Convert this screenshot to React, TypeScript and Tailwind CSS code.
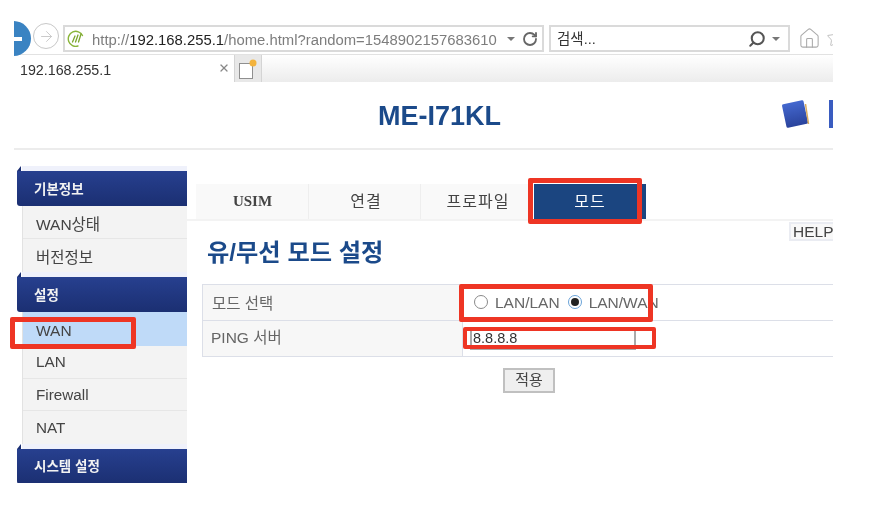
import { ArrowRight, House, RotateCw, Search, Star, X } from 'lucide-react';

const menuGroups = [
  { title: '기본정보', items: ['WAN상태', '버전정보'] },
  { title: '설정', items: ['WAN', 'LAN', 'Firewall', 'NAT'] },
  { title: '시스템 설정', items: [] as string[] },
];

const tabs = ['USIM', '연결', '프로파일'];

function SiteIcon() {
  return (
    <svg width="18" height="18" viewBox="0 0 18 18" fill="none" stroke="#8ab53a" strokeLinecap="round">
      <path d="M15.5 5.5A7.5 7.5 0 1 0 11 16" strokeWidth="1.4" />
      <path d="M5.5 12 8 6M8.5 12 11 5M11.5 12 14 4" strokeWidth="1.3" stroke="#7aa52c" />
    </svg>
  );
}

function NewTabIcon() {
  return (
    <svg width="20" height="20" viewBox="0 0 20 20">
      <rect x="1.5" y="4.5" width="13" height="15" fill="#fff" stroke="#8f8f8f" />
      <circle cx="15" cy="4" r="3.5" fill="#f3b33d" />
    </svg>
  );
}

function BookIcon() {
  return (
    <svg width="30" height="32" viewBox="0 0 30 32">
      <defs>
        <linearGradient id="book" x1="0" y1="0" x2="0" y2="1">
          <stop offset="0" stopColor="#4468cf" />
          <stop offset="1" stopColor="#2a439c" />
        </linearGradient>
      </defs>
      <rect x="4" y="4" width="22" height="24" rx="1.5" fill="url(#book)" transform="rotate(-12 15 16)" />
      <path d="M25.5 6 28.5 26" stroke="#d9ab5e" strokeWidth="1.5" />
    </svg>
  );
}

function Radio({ checked }: { checked?: boolean }) {
  return (
    <span
      className={
        checked
          ? 'flex h-[14px] w-[14px] items-center justify-center rounded-full border border-[#6aa3d8]'
          : 'h-[14px] w-[14px] rounded-full border border-[#8a8a8a]'
      }
    >
      {checked && <span className="h-[8px] w-[8px] rounded-full bg-[#222]" />}
    </span>
  );
}

export default function App() {
  return (
    <div className="relative h-[514px] w-[888px] overflow-hidden bg-white font-['Liberation_Sans','Noto_Sans_CJK_KR',sans-serif] blur-[0.4px]">
      <div className="ml-[14px] h-[483px] w-[819px] overflow-hidden">
        {/* browser toolbar */}
        <div className="flex h-[54px] items-start pt-[25px]">
          <div className="-ml-[18px] -mt-[4px] flex h-[35px] w-[35px] shrink-0 items-center justify-end rounded-full bg-[#3a83c2] pr-[9px]">
            <span className="h-[4px] w-[9px] bg-white" />
          </div>
          <div className="-mt-[2px] ml-[2px] flex h-[26px] w-[26px] shrink-0 items-center justify-center rounded-full border border-[#c8c8c8]">
            <ArrowRight className="h-[17px] w-[17px] text-[#c4c4c4]" strokeWidth={1.25} />
          </div>
          <div className="ml-[4px] flex h-[27px] w-[481px] shrink-0 items-center border-2 border-[#dadada] px-[2px] text-[14.85px] text-[#7d7d7d]">
            <SiteIcon />
            <span className="ml-[7px] whitespace-nowrap pt-[3px]">
              http://<span className="text-[#222]">192.168.255.1</span>/home.html?random=1548902157683610
            </span>
            <span className="ml-[10px] h-0 w-0 border-x-[4px] border-t-[4px] border-x-transparent border-t-[#777]" />
            <RotateCw className="ml-[7px] h-[16px] w-[16px] text-[#666]" strokeWidth={2.75} />
          </div>
          <div className="ml-[5px] flex h-[27px] w-[241px] shrink-0 items-center border-2 border-[#dadada] pl-[6px] pr-[8px] text-[14.5px] text-[#333]">
            <span className="flex-1 pt-[2px]">검색...</span>
            <Search className="h-[18px] w-[18px] -scale-x-100 text-[#555]" strokeWidth={2.75} />
            <span className="ml-[6px] h-0 w-0 border-x-[4px] border-t-[4px] border-x-transparent border-t-[#777]" />
          </div>
          <House className="ml-[8px] mt-[2px] h-[23px] w-[23px] shrink-0 text-[#aaa]" strokeWidth={1.1} />
          <Star className="ml-[5px] mt-[3px] h-[20px] w-[20px] shrink-0 text-[#bbb]" strokeWidth={1.1} />
        </div>

        {/* tab strip */}
        <div className="flex h-[28px] items-stretch border-t border-[#e2e2e2]">
          <div className="flex w-[220px] shrink-0 items-center justify-between pl-[6px] pr-[4px] text-[14.25px] text-[#333]">
            <span className="pt-[5px]">192.168.255.1</span>
            <X className="-mt-[2px] h-[12px] w-[12px] text-[#888]" strokeWidth={2.5} />
          </div>
          <div className="flex w-[28px] shrink-0 items-center justify-center border-x border-[#d4d4d4] bg-[#e8e8e8]">
            <NewTabIcon />
          </div>
          <div className="flex-1 bg-gradient-to-b from-white to-[#ececec]" />
        </div>

        {/* page header */}
        <div className="flex h-[68px] items-center border-b-2 border-[#ececec] pb-[2px]">
          <h1 className="ml-[364px] mr-auto pt-[5px] text-[27px] font-bold leading-none text-[#1b4a8a]">ME-I71KL</h1>
          <div className="flex shrink-0 items-center">
            <BookIcon />
            <span className="ml-[19px] mr-0 h-[28px] w-[4px] bg-[#3a5cc0]" />
          </div>
        </div>

        <div className="flex pt-[16px]">
          {/* sidebar */}
          <aside className="w-[173px] shrink-0">
            {menuGroups.map((group) => (
              <div key={group.title}>
                <div className="ml-[8px] h-[5px] bg-[#eff1fb]" />
                <div className="relative ml-[3px] flex h-[35px] items-center rounded-bl-[3px] bg-gradient-to-b from-[#27408f] to-[#1b2f72] pl-[17px] pt-[3px] text-[13.5px] font-bold text-[#f2f2f2]">
                  {group.title}
                  <span className="absolute -top-[5px] left-0 h-0 w-0 border-b-[5px] border-l-[4px] border-b-[#1b2f72] border-l-transparent" />
                </div>
                <ul className="ml-[8px] border-l border-[#e2e2e2]">
                  {group.items.map((item) => (
                    <li
                      key={item}
                      className={
                        item === 'WAN'
                          ? 'flex h-[34px] items-center bg-[#bfdaf8] pl-[13px] pt-[3px] text-[15.5px] text-[#444]'
                          : group.items.length > 2
                            ? 'flex h-[32.5px] items-center border-b border-[#e6e6e6] bg-[#f3f3f3] pl-[13px] pt-[2px] text-[15.25px] text-[#444] last:border-b-0'
                            : 'flex h-[33px] items-center border-b border-[#e6e6e6] bg-[#f3f3f3] pl-[13px] pt-[5px] text-[15.5px] text-[#444] last:border-b-0'
                      }
                    >
                      {item}
                    </li>
                  ))}
                </ul>
              </div>
            ))}
          </aside>

          {/* content */}
          <main className="min-w-0 flex-1 pt-[18px]">
            <div className="flex border-b-2 border-[#f3f3f3] pl-[9px]">
              {tabs.map((tab) => (
                <div
                  key={tab}
                  className={
                    tab === 'USIM'
                      ? "flex h-[35px] w-[113px] items-center justify-center border-r border-[#eeeeee] bg-[#f9f9f9] pl-px font-['Liberation_Serif',serif] text-[15px] font-bold text-[#444]"
                      : 'flex h-[35px] w-[112px] items-center justify-center border-r border-[#eeeeee] bg-[#f9f9f9] pl-[3px] pt-px text-[16px] tracking-[1px] text-[#444]'
                  }
                >
                  {tab}
                </div>
              ))}
              <div className="ml-[1px] flex h-[35px] w-[112px] items-center justify-center bg-[#1b4580] pt-px text-[16px] tracking-[1px] text-white">
                모드
              </div>
            </div>
            <div className="flex justify-end pt-px">
              <div className="h-[19px] w-[44px] overflow-hidden whitespace-nowrap border-2 border-r-0 border-[#eaecf2] bg-[#f8f8f8] pl-[2px] text-[15.5px] leading-[15px] text-[#444]">
                HELP
              </div>
            </div>
            <h2 className="ml-[20px] h-[26px] text-[24.25px] font-bold leading-[24px] text-[#1b4a8a]">유/무선 모드 설정</h2>
            <div className="ml-[15px] mt-[17px] grid grid-cols-[261px_1fr] border-y border-[#dcdfe8] text-[15.5px] text-[#666]">
              <div className="flex h-[35.5px] items-center border-b border-l border-[#dcdfe8] bg-[#f7f7f7] pl-[9px] pt-[2px]">모드 선택</div>
              <div className="flex h-[35.5px] items-center border-b border-[#dcdfe8] pl-[11px]">
                <Radio />
                <span className="ml-[7px]">LAN/LAN</span>
                <span className="ml-[8px] flex"><Radio checked /></span>
                <span className="ml-[7px]">LAN/WAN</span>
              </div>
              <div className="flex h-[35px] items-center border-l border-r border-[#dcdfe8] bg-[#f7f7f7] pl-[8px]">PING 서버</div>
              <div className="flex h-[35px] items-start pl-[7px] pt-[9px]">
                <div className="h-[20px] w-[166px] border-x-2 border-b-2 border-[#aaa] pl-[1px] text-[14.5px] leading-[17px] text-[#333]">8.8.8.8</div>
              </div>
            </div>
            <div className="ml-[316px] mt-[11px] flex h-[25px] w-[52px] items-center justify-center border-2 border-[#c0c0c0] bg-[#efefef] text-[15px] text-[#444]">
              적용
            </div>
          </main>
        </div>
      </div>

      {/* red annotation boxes drawn over the screenshot */}
      <div className="absolute left-[528px] top-[178px] h-[46px] w-[114px] rounded-[2px] border-[5px] border-[#ee3524]" />
      <div className="absolute left-[459px] top-[284px] h-[38px] w-[194px] rounded-[2px] border-[5px] border-[#ee3524]" />
      <div className="absolute left-[463px] top-[327px] h-[22px] w-[193px] rounded-[2px] border-4 border-[#ee3524]" />
      <div className="absolute left-[10px] top-[317px] h-[32px] w-[126px] rounded-[2px] border-[5px] border-[#ee3524]" />
    </div>
  );
}
